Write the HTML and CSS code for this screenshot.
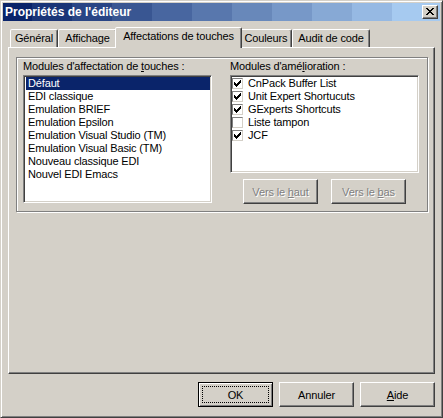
FILE: index.html
```html
<!DOCTYPE html>
<html lang="fr">
<head>
<meta charset="utf-8">
<title>Propriétés de l'éditeur</title>
<link rel="stylesheet" href="styles.css">
</head>
<body>
<div class="window">
  <div class="titlebar">
    <span class="title">Propriétés de l'éditeur</span>
    <span class="close"><svg width="8" height="7" viewBox="0 0 8 7" shape-rendering="crispEdges"><path fill="#000" d="M0 0h2v1H0zM6 0h2v1H6zM1 1h2v1H1zM5 1h2v1H5zM2 2h4v1H2zM3 3h2v1H3zM2 4h4v1H2zM1 5h2v1H1zM5 5h2v1H5zM0 6h2v1H0zM6 6h2v1H6z"/></svg></span>
  </div>
  <div class="content">
    <div class="tabs">
      <div class="tab t-gen">Général</div>
      <div class="tab t-aff">Affichage</div>
      <div class="tab t-keys selected">Affectations de touches</div>
      <div class="tab t-col">Couleurs</div>
      <div class="tab t-aud">Audit de code</div>
    </div>
    <div class="panel">
      <div class="group">
        <div class="col">
          <div class="label">Modules d'affectation de <u>t</u>ouches :</div>
          <div class="listbox left-list">
            <div class="item sel">Défaut</div>
            <div class="item">EDI classique</div>
            <div class="item">Emulation BRIEF</div>
            <div class="item">Emulation Epsilon</div>
            <div class="item">Emulation Visual Studio (TM)</div>
            <div class="item">Emulation Visual Basic (TM)</div>
            <div class="item">Nouveau classique EDI</div>
            <div class="item">Nouvel EDI Emacs</div>
          </div>
        </div>
        <div class="col">
          <div class="label">Modules d'amé<u>l</u>ioration :</div>
          <div class="listbox right-list">
            <div class="check-row"><span class="cb checked"><svg width="7" height="7" viewBox="0 0 7 7" shape-rendering="crispEdges"><path d="M6 0h1v1H6zM5 1h2v1H5zM0 2h1v1H0zM4 2h3v1H4zM0 3h2v1H0zM3 3h3v1H3zM0 4h5v1H0zM1 5h3v1H1zM2 6h1v1H2z"/></svg></span><span>CnPack Buffer List</span></div>
            <div class="check-row"><span class="cb checked"><svg width="7" height="7" viewBox="0 0 7 7" shape-rendering="crispEdges"><path d="M6 0h1v1H6zM5 1h2v1H5zM0 2h1v1H0zM4 2h3v1H4zM0 3h2v1H0zM3 3h3v1H3zM0 4h5v1H0zM1 5h3v1H1zM2 6h1v1H2z"/></svg></span><span>Unit Expert Shortucuts</span></div>
            <div class="check-row"><span class="cb checked"><svg width="7" height="7" viewBox="0 0 7 7" shape-rendering="crispEdges"><path d="M6 0h1v1H6zM5 1h2v1H5zM0 2h1v1H0zM4 2h3v1H4zM0 3h2v1H0zM3 3h3v1H3zM0 4h5v1H0zM1 5h3v1H1zM2 6h1v1H2z"/></svg></span><span>GExperts Shortcuts</span></div>
            <div class="check-row"><span class="cb"></span><span>Liste tampon</span></div>
            <div class="check-row"><span class="cb checked"><svg width="7" height="7" viewBox="0 0 7 7" shape-rendering="crispEdges"><path d="M6 0h1v1H6zM5 1h2v1H5zM0 2h1v1H0zM4 2h3v1H4zM0 3h2v1H0zM3 3h3v1H3zM0 4h5v1H0zM1 5h3v1H1zM2 6h1v1H2z"/></svg></span><span>JCF</span></div>
          </div>
          <div class="movebtns">
            <div class="btn disabled"><span>Vers le <u>h</u>aut</span></div>
            <div class="btn disabled"><span>Vers le <u>b</u>as</span></div>
          </div>
        </div>
      </div>
    </div>
    <div class="footer">
      <div class="btn default"><span class="focus">OK</span></div>
      <div class="btn"><span>Annuler</span></div>
      <div class="btn"><span><u>A</u>ide</span></div>
    </div>
  </div>
</div>
</body>
</html>
```

FILE: styles.css
```css
html, body {
  margin: 0;
  padding: 0;
  background: #D4D0C8;
}
body {
  font-family: "Liberation Sans", Arial, sans-serif;
  font-size: 11px;
  letter-spacing: -0.15px;
  color: #000;
}
u {
  text-decoration: underline;
  text-underline-offset: 1px;
}
.window {
  width: 443px;
  height: 418px;
  box-sizing: border-box;
  background: #D4D0C8;
  border: 1px solid;
  border-color: #D4D0C8 #404040 #404040 #D4D0C8;
  box-shadow: inset 1px 1px #fff, inset -1px -1px #808080;
  padding: 2px;
  display: flex;
  flex-direction: column;
}
.titlebar {
  height: 18px;
  display: flex;
  justify-content: space-between;
  align-items: flex-start;
  background: linear-gradient(to right,
    #0A246A 0 29px, #1A3577 29px 69px, #294585 69px 109px, #395692 109px 149px,
    #4866A0 149px 189px, #5877AD 189px 229px, #6888BA 229px 269px, #7798C8 269px 309px,
    #87A9D5 309px 349px, #96B9E3 349px 389px, #A6CAF0 389px);
}
.title {
  color: #fff;
  font-weight: bold;
  font-size: 12px;
  letter-spacing: 0;
  line-height: 18px;
  padding-left: 2px;
  white-space: nowrap;
}
.close {
  width: 16px;
  height: 14px;
  box-sizing: border-box;
  margin: 2px 2px 0 0;
  background: #D4D0C8;
  border: 1px solid;
  border-color: #fff #404040 #404040 #fff;
  box-shadow: inset -1px -1px #808080;
  padding: 2px 0 0 3px;
}
.close svg { display: block; }
.content {
  flex: 1;
  padding: 6px 5px 0;
  display: flex;
  flex-direction: column;
}
.tabs {
  display: flex;
  align-items: flex-end;
  height: 20px;
  padding-left: 2px;
}
.tab {
  height: 18px;
  box-sizing: border-box;
  border: 1px solid;
  border-bottom: 0;
  border-color: #fff #404040 transparent #fff;
  box-shadow: inset -1px 0 #808080;
  border-radius: 2px 2px 0 0;
  background: #D4D0C8;
  text-align: center;
  line-height: 16px;
  white-space: nowrap;
}
.t-gen { width: 48px; }
.t-aff { width: 59px; }
.t-keys { width: 127px; }
.t-col { width: 52px; }
.t-aud { width: 78px; }
.tab.selected {
  height: 21px;
  margin: 0 -2px -1px;
  position: relative;
  z-index: 1;
}
.panel {
  height: 327px;
  box-sizing: border-box;
  border: 1px solid;
  border-color: #fff #404040 #404040 #fff;
  box-shadow: inset -1px -1px #808080;
  padding: 9px 0 0 7px;
}
.group {
  width: 412px;
  height: 155px;
  box-sizing: border-box;
  border: 1px solid #808080;
  box-shadow: inset 1px 1px #fff, 1px 1px #fff;
  padding: 2px 0 0 6px;
  display: flex;
  gap: 18px;
}
.col {
  width: 189px;
  display: flex;
  flex-direction: column;
}
.label {
  height: 13px;
  line-height: 13px;
  margin-bottom: 2px;
  white-space: nowrap;
}
.listbox {
  background: #fff;
  box-sizing: border-box;
  border: 1px solid;
  border-color: #808080 #fff #fff #808080;
  box-shadow: inset 1px 1px #404040, inset -1px -1px #D4D0C8;
  padding: 1px 1px 1px 2px;
}
.left-list { height: 128px; }
.right-list { height: 98px; padding-left: 1px; }
.item {
  height: 13px;
  line-height: 13px;
  padding-left: 2px;
  white-space: nowrap;
}
.item.sel {
  background: #0A246A;
  color: #fff;
}
.check-row {
  display: flex;
  align-items: center;
  height: 13px;
  line-height: 13px;
  white-space: nowrap;
}
.cb {
  width: 11px;
  height: 11px;
  box-sizing: border-box;
  border: 1px solid;
  border-color: #808080 #D4D0C8 #D4D0C8 #808080;
  background: #fff;
  margin-right: 5px;
  padding: 1px 0 0 1px;
  flex: none;
}
.cb svg { display: block; }
.movebtns {
  display: flex;
  justify-content: center;
  gap: 13px;
  margin-top: 6px;
}
.btn {
  width: 75px;
  height: 25px;
  box-sizing: border-box;
  border: 1px solid;
  border-color: #fff #404040 #404040 #fff;
  box-shadow: inset -1px -1px #808080;
  background: #D4D0C8;
  display: flex;
  align-items: center;
  justify-content: center;
  white-space: nowrap;
}
.btn.disabled {
  color: #808080;
  text-shadow: 1px 1px 0 #fff;
}
.btn.default {
  border-color: #000;
  box-shadow: inset 1px 1px #fff, inset -1px -1px #808080;
  align-items: stretch;
  justify-content: stretch;
}
.focus {
  flex: 1;
  margin: 3px;
  border: 1px dotted #000;
  display: flex;
  align-items: center;
  justify-content: center;
}
.footer {
  display: flex;
  justify-content: flex-end;
  gap: 6px;
  margin-top: 8px;
}
```
